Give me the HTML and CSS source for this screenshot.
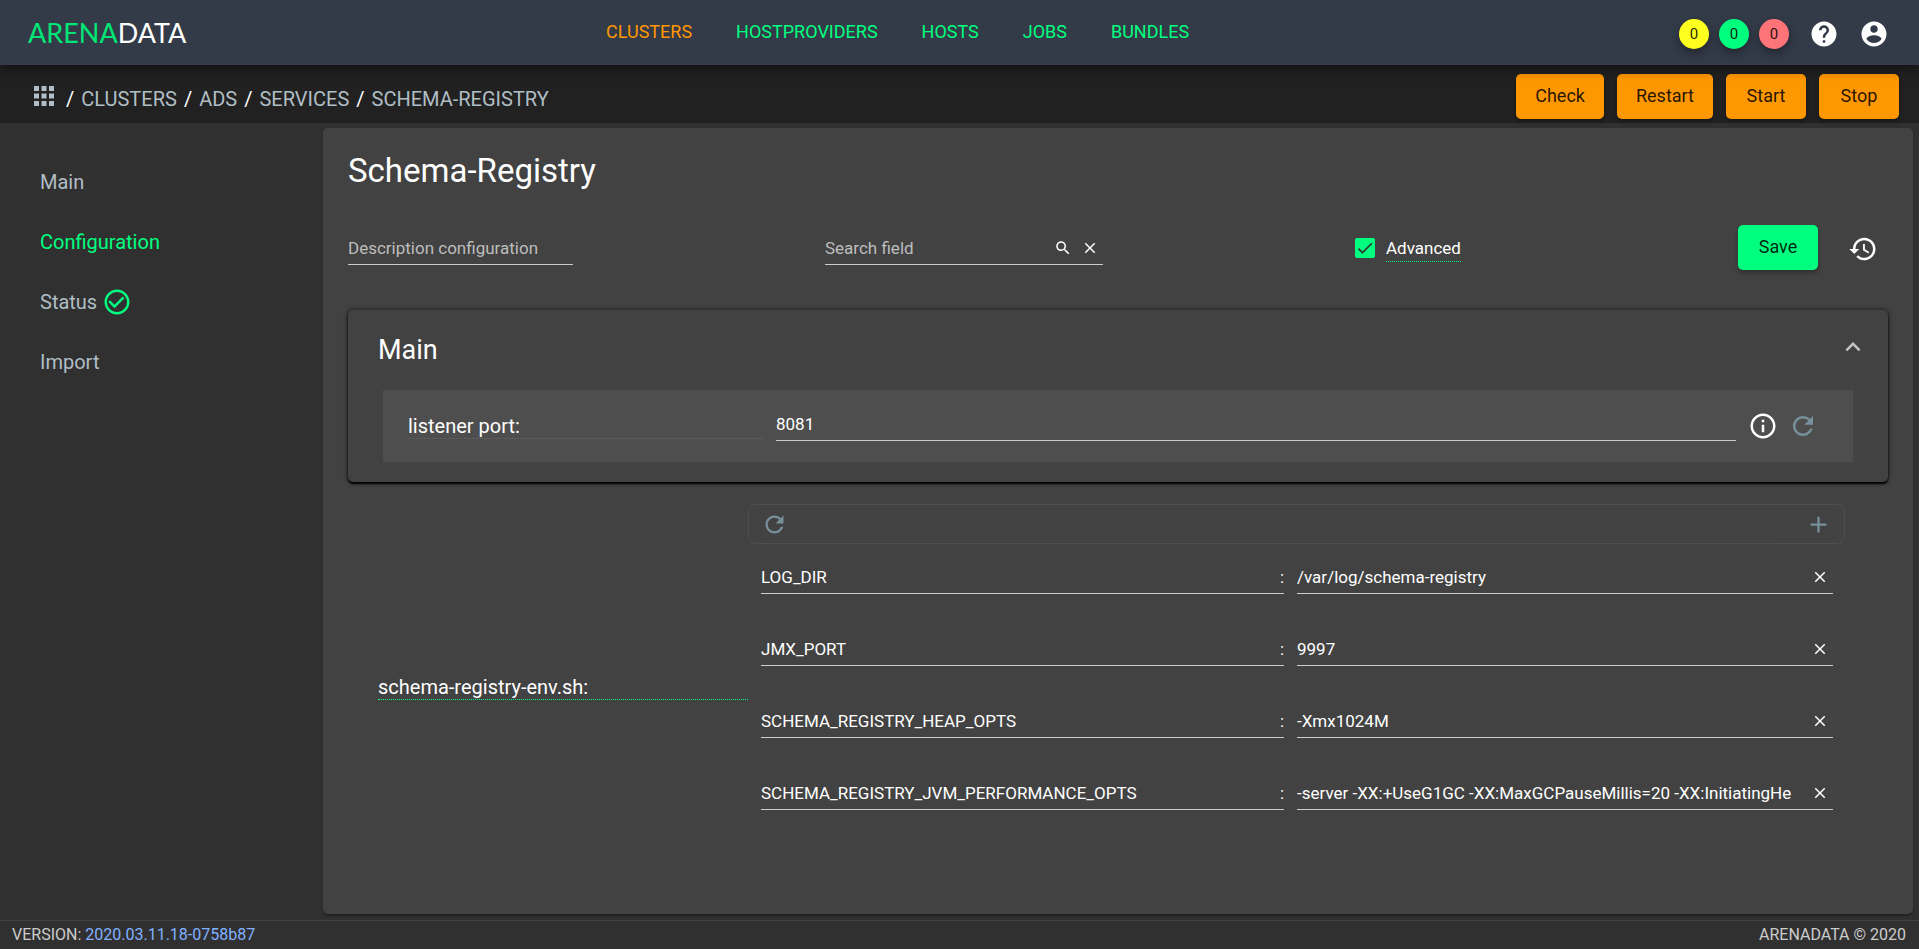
FILE: index.html
```
<!DOCTYPE html>
<html lang="en">
<head>
<meta charset="utf-8">
<title>Schema-Registry - Configuration</title>
<link rel="stylesheet" href="styles.css">
</head>
<body>
<svg class="sprite" aria-hidden="true">
  <symbol id="apps" viewBox="0 0 24 24"><path d="M4 8h4V4H4v4zm6 12h4v-4h-4v4zm-6 0h4v-4H4v4zm0-6h4v-4H4v4zm6 0h4v-4h-4v4zm6-10v4h4V4h-4zm-6 4h4V4h-4v4zm6 6h4v-4h-4v4zm0 6h4v-4h-4v4z"/></symbol>
  <symbol id="help" viewBox="0 0 24 24"><path d="M12 2C6.48 2 2 6.48 2 12s4.48 10 10 10 10-4.48 10-10S17.52 2 12 2zm1 17h-2v-2h2v2zm2.07-7.75l-.9.92C13.45 12.9 13 13.5 13 15h-2v-.5c0-1.1.45-2.1 1.17-2.83l1.24-1.26c.37-.36.59-.86.59-1.41 0-1.1-.9-2-2-2s-2 .9-2 2H8c0-2.21 1.79-4 4-4s4 1.79 4 4c0 .88-.36 1.68-.93 2.25z"/></symbol>
  <symbol id="account" viewBox="0 0 24 24"><path d="M12 2C6.48 2 2 6.48 2 12s4.48 10 10 10 10-4.48 10-10S17.52 2 12 2zm0 3c1.66 0 3 1.34 3 3s-1.34 3-3 3-3-1.340-3-3 1.340-3 3-3zm0 14.2c-2.500 0-4.710-1.280-6-3.220.030-1.990 4-3.080 6-3.080 1.990 0 5.970 1.090 6 3.080-1.290 1.940-3.500 3.220-6 3.220z"/></symbol>
  <symbol id="done" viewBox="0 0 24 24"><path d="M16.590 7.580L10 14.170l-3.590-3.580L5 12l5 5 8-8zM12 2C6.480 2 2 6.480 2 12s4.480 10 10 10 10-4.480 10-10S17.520 2 12 2zm0 18c-4.420 0-8-3.580-8-8s3.580-8 8-8 8 3.580 8 8-3.580 8-8 8z"/></symbol>
  <symbol id="search" viewBox="0 0 24 24"><path d="M15.500 14h-.79l-.28-.27C15.410 12.590 16 11.110 16 9.500 16 5.910 13.090 3 9.500 3S3 5.910 3 9.500 5.910 16 9.500 16c1.610 0 3.090-.59 4.230-1.570l.27.28v.79l5 4.990L20.490 19l-4.990-5zm-6 0C7.010 14 5 11.990 5 9.500S7.010 5 9.500 5 14 7.010 14 9.500 11.990 14 9.500 14z"/></symbol>
  <symbol id="close" viewBox="0 0 24 24"><path d="M19 6.410L17.590 5 12 10.590 6.410 5 5 6.410 10.590 12 5 17.590 6.410 19 12 13.410 17.590 19 19 17.590 13.410 12z"/></symbol>
  <symbol id="history" viewBox="0 0 24 24"><path d="M13 3c-4.970 0-9 4.030-9 9H1l3.890 3.890.07.14L9 12H6c0-3.870 3.130-7 7-7s7 3.130 7 7-3.130 7-7 7c-1.930 0-3.680-.79-4.940-2.060l-1.420 1.420C8.270 19.990 10.510 21 13 21c4.970 0 9-4.030 9-9s-4.030-9-9-9zm-1 5v5l4.280 2.540.72-1.210-3.500-2.080V8H12z"/></symbol>
  <symbol id="info" viewBox="0 0 24 24"><path d="M11 17h2v-6h-2v6zm1-15C6.480 2 2 6.480 2 12s4.480 10 10 10 10-4.480 10-10S17.520 2 12 2zm0 18c-4.410 0-8-3.590-8-8s3.590-8 8-8 8 3.590 8 8-3.590 8-8 8zM11 9h2V7h-2v2z"/></symbol>
  <symbol id="refresh" viewBox="0 0 24 24"><path d="M17.650 6.350C16.200 4.900 14.210 4 12 4c-4.420 0-7.990 3.580-7.990 8s3.570 8 7.990 8c3.730 0 6.840-2.550 7.730-6h-2.080c-.82 2.330-3.040 4-5.650 4-3.310 0-6-2.690-6-6s2.690-6 6-6c1.660 0 3.140.69 4.220 1.780L13 11h7V4l-2.350 2.350z"/></symbol>
  <symbol id="add" viewBox="0 0 24 24"><path d="M19 13h-6v6h-2v-6H5v-2h6V5h2v6h6v2z"/></symbol>
  <symbol id="less" viewBox="0 0 24 24"><path d="M12 8l-6 6 1.410 1.410L12 10.830l4.590 4.580L18 14z"/></symbol>
  <symbol id="tick" viewBox="0 0 24 24"><path d="M4.100 12.700 9 17.600 20.300 6.300" fill="none" stroke="currentColor" stroke-width="2"/></symbol>
</svg>

<header class="topbar">
  <a class="logo" href="#"><span class="logo-accent">ARENA</span>DATA</a>
  <nav class="topnav">
    <a class="active" href="#">CLUSTERS</a>
    <a href="#">HOSTPROVIDERS</a>
    <a href="#">HOSTS</a>
    <a href="#">JOBS</a>
    <a href="#">BUNDLES</a>
  </nav>
  <div class="topbar-tools">
    <button class="counter counter-running">0</button>
    <button class="counter counter-success">0</button>
    <button class="counter counter-failed">0</button>
    <button class="icon-button" aria-label="Help"><svg class="icon"><use href="#help"/></svg></button>
    <button class="icon-button" aria-label="Account"><svg class="icon"><use href="#account"/></svg></button>
  </div>
</header>

<div class="subbar">
  <nav class="crumbs">
    <a class="crumb-home" href="#" aria-label="Home"><svg class="icon"><use href="#apps"/></svg></a>
    <span>/</span><a href="#">CLUSTERS</a>
    <span>/</span><a href="#">ADS</a>
    <span>/</span><a href="#">SERVICES</a>
    <span>/</span><a href="#">SCHEMA-REGISTRY</a>
  </nav>
  <div class="actions">
    <button class="button">Check</button>
    <button class="button">Restart</button>
    <button class="button">Start</button>
    <button class="button">Stop</button>
  </div>
</div>

<div class="layout">
  <nav class="sidebar">
    <a href="#">Main</a>
    <a class="active" href="#">Configuration</a>
    <a href="#">Status <svg class="icon icon-ok"><use href="#done"/></svg></a>
    <a href="#">Import</a>
  </nav>

  <main class="card">
    <h1>Schema-Registry</h1>

    <div class="toolbar">
      <input class="field description" type="text" placeholder="Description configuration" aria-label="Description configuration">
      <div class="field search">
        <input type="text" placeholder="Search field" aria-label="Search field">
        <button class="mini-button" aria-label="Search"><svg class="icon-small"><use href="#search"/></svg></button>
        <button class="mini-button" aria-label="Clear"><svg class="icon-small"><use href="#close"/></svg></button>
      </div>
      <label class="advanced">
        <span class="checkbox"><input type="checkbox" checked><svg class="checkmark"><use href="#tick"/></svg></span>
        <span class="advanced-text">Advanced</span>
      </label>
      <div class="save-group">
        <button class="button button-save">Save</button>
        <button class="icon-button history" aria-label="History"><svg class="icon"><use href="#history"/></svg></button>
      </div>
    </div>

    <section class="panel">
      <div class="panel-header">
        <h2>Main</h2>
        <button class="icon-button panel-toggle" aria-label="Collapse"><svg class="icon"><use href="#less"/></svg></button>
      </div>
      <div class="panel-row">
        <label class="row-label" for="port">listener port:</label>
        <input class="field port" id="port" type="text" value="8081">
        <button class="icon-button" aria-label="Info"><svg class="icon"><use href="#info"/></svg></button>
        <button class="icon-button muted" aria-label="Reset"><svg class="icon"><use href="#refresh"/></svg></button>
      </div>
    </section>

    <section class="map">
      <div class="map-label">schema-registry-env.sh:</div>
      <div class="map-body">
        <div class="map-tools">
          <button class="muted map-button" aria-label="Reset"><svg class="icon-medium"><use href="#refresh"/></svg></button>
          <button class="muted map-button" aria-label="Add"><svg class="icon-medium"><use href="#add"/></svg></button>
        </div>
        <div class="pair">
          <div class="field pair-key"><input type="text" value="LOG_DIR" aria-label="Key 1"><span>:</span></div>
          <div class="field pair-value"><input type="text" value="/var/log/schema-registry" aria-label="Value 1"><button class="mini-button" aria-label="Remove"><svg class="icon-small"><use href="#close"/></svg></button></div>
        </div>
        <div class="pair">
          <div class="field pair-key"><input type="text" value="JMX_PORT" aria-label="Key 2"><span>:</span></div>
          <div class="field pair-value"><input type="text" value="9997" aria-label="Value 2"><button class="mini-button" aria-label="Remove"><svg class="icon-small"><use href="#close"/></svg></button></div>
        </div>
        <div class="pair">
          <div class="field pair-key"><input type="text" value="SCHEMA_REGISTRY_HEAP_OPTS" aria-label="Key 3"><span>:</span></div>
          <div class="field pair-value"><input type="text" value="-Xmx1024M" aria-label="Value 3"><button class="mini-button" aria-label="Remove"><svg class="icon-small"><use href="#close"/></svg></button></div>
        </div>
        <div class="pair">
          <div class="field pair-key"><input type="text" value="SCHEMA_REGISTRY_JVM_PERFORMANCE_OPTS" aria-label="Key 4"><span>:</span></div>
          <div class="field pair-value"><input type="text" value="-server -XX:+UseG1GC -XX:MaxGCPauseMillis=20 -XX:InitiatingHe" aria-label="Value 4"><button class="mini-button" aria-label="Remove"><svg class="icon-small"><use href="#close"/></svg></button></div>
        </div>
      </div>
    </section>
  </main>
</div>

<footer class="footer">
  <span>VERSION: <a href="#">2020.03.11.18-0758b87</a></span>
  <span>ARENADATA © 2020</span>
</footer>
</body>
</html>
```
FILE: styles.css
```
* {
  box-sizing: border-box;
}

body {
  margin: 0;
  min-height: 100vh;
  display: flex;
  flex-direction: column;
  background: #303030;
  color: #fff;
  font-family: Roboto, "Liberation Sans", sans-serif;
  font-size: 18px;
  line-height: 24px;
}

a {
  color: inherit;
  text-decoration: none;
}

button,
input {
  font: inherit;
  color: inherit;
  background: none;
  border: 0;
  padding: 0;
  margin: 0;
  outline: none;
}

h1,
h2 {
  margin: 0;
  font-weight: 400;
}

.sprite {
  display: none;
}

.icon,
.icon-medium,
.icon-small {
  display: block;
  fill: currentColor;
  flex: none;
}

.icon {
  width: 30px;
  height: 30px;
}

.icon-medium {
  width: 27px;
  height: 27px;
}

.icon-small {
  width: 18px;
  height: 18px;
}

.icon-button {
  display: flex;
  align-items: center;
  justify-content: center;
  width: 50px;
  height: 50px;
}

.muted {
  color: #78909c;
}

/* Top bar */

.topbar {
  display: grid;
  grid-template-columns: 607fr auto 731fr;
  align-items: center;
  height: 65px;
  background: #333a48;
  box-shadow: 0 3px 12px rgba(0, 0, 0, 0.55);
  z-index: 1;
}

.logo {
  padding-left: 28px;
  font-family: Lato, sans-serif;
  font-size: 27px;
  line-height: 32px;
}

.logo-accent {
  color: #00e676;
}

.topnav {
  display: flex;
  gap: 44px;
  color: #00ff7f;
  padding-bottom: 2px;
}

.topnav .active {
  color: #ff9800;
}

.topbar-tools {
  display: flex;
  align-items: center;
  justify-content: flex-end;
  padding: 3px 20px 0 0;
}

.counter {
  width: 30px;
  height: 30px;
  margin-right: 10px;
  border-radius: 50%;
  color: rgba(0, 0, 0, 0.87);
  font-size: 15px;
  line-height: 30px;
  box-shadow: 0 4px 10px rgba(0, 0, 0, 0.35);
}

.counter-running {
  background: #ffff1f;
}

.counter-success {
  background: #00ff7f;
}

.counter-failed {
  background: #ff7479;
}

/* Breadcrumb bar */

.subbar {
  display: flex;
  align-items: center;
  justify-content: space-between;
  height: 58px;
  padding: 4px 20px 0 29px;
  background: #212121;
}

.crumbs {
  display: flex;
  align-items: center;
  gap: 7px;
  padding-top: 5px;
  font-size: 20px;
}

.crumbs a {
  color: #b0bec5;
}

.crumb-home {
  padding-bottom: 5px;
}

.actions {
  display: flex;
  gap: 13px;
}

.button {
  min-width: 80px;
  height: 45px;
  padding: 0 19px;
  border-radius: 5px;
  background: #ff9800;
  color: rgba(0, 0, 0, 0.87);
  box-shadow: 0 3px 4px rgba(0, 0, 0, 0.25);
}

.button-save {
  background: #00ff7f;
}

/* Page body */

.layout {
  flex: 1;
  display: flex;
  padding: 5px 6px 6px 0;
}

.sidebar {
  flex: none;
  width: 323px;
  padding: 24px 0 0 40px;
  font-size: 20px;
  color: #b0bec5;
}

.sidebar a {
  display: flex;
  align-items: center;
  gap: 5px;
  height: 60px;
}

.sidebar .active,
.icon-ok {
  color: #00ff7f;
}

.card {
  flex: 1;
  min-width: 0;
  padding: 21px 25px 20px;
  border-radius: 5px;
  background: #424242;
  box-shadow: 0 2px 2px rgba(0, 0, 0, 0.3);
}

h1 {
  font-size: 33px;
  line-height: 44px;
}

.toolbar {
  display: flex;
  justify-content: space-between;
  align-items: center;
  margin: 29px 0 38px;
}

.field {
  border-bottom: 1px solid #ccc;
  height: 36px;
  padding-top: 2px;
  font-size: 17px;
  min-width: 0;
}

.field input {
  flex: 1;
  min-width: 0;
  height: 24px;
}

input::placeholder {
  color: #bdbdbd;
  opacity: 1;
}

.description {
  width: 225px;
}

.search {
  display: flex;
  align-items: center;
  width: 278px;
}

.mini-button {
  display: flex;
  align-items: center;
  justify-content: center;
  flex: none;
  width: 27px;
  height: 24px;
}

.advanced {
  display: flex;
  align-items: center;
  gap: 11px;
  padding-top: 2px;
  font-size: 17px;
}

.checkbox {
  display: grid;
  width: 20px;
  height: 20px;
}

.checkbox input,
.checkmark {
  grid-area: 1 / 1;
  width: 20px;
  height: 20px;
}

.checkbox input {
  appearance: none;
  border-radius: 2px;
  background: #00ff7f;
}

.checkmark {
  color: #303030;
  pointer-events: none;
}

.advanced-text {
  border-bottom: 1px dotted #00ff7f;
  line-height: 26px;
}

.save-group {
  display: flex;
  align-items: center;
  gap: 20px;
  padding-left: 25px;
}

.history {
  padding-top: 3px;
}

/* Main group */

.panel {
  padding: 20px 35px;
  border-radius: 5px;
  box-shadow: 0 2px 2px #000, 0 0 5px rgba(0, 0, 0, 0.7);
}

.panel-header {
  display: flex;
  align-items: center;
  justify-content: space-between;
  height: 60px;
  margin: 0 -15px 0 -5px;
  padding-bottom: 26px;
}

.panel-toggle {
  width: 30px;
  color: #c6c6c6;
}

h2 {
  padding-top: 5px;
  font-size: 27px;
  line-height: 36px;
}

.panel-row {
  display: flex;
  align-items: center;
  height: 72px;
  padding: 0 30px 0 25px;
  background: #4e4e4e;
}

.row-label {
  flex: none;
  width: 355px;
  margin-right: 13px;
  border-bottom: 1px dotted #666;
  font-size: 20px;
}

.port {
  flex: 1;
  margin: 0 7px 6px 0;
}

.panel-row .icon-button {
  width: 40px;
}

/* Key and value list */

.map {
  display: flex;
  align-items: center;
  padding: 22px 43px 0 30px;
}

.map-label {
  flex: none;
  width: 370px;
  border-bottom: 1px dotted #00ff7f;
  font-size: 20px;
}

.map-body {
  flex: 1;
  min-width: 0;
  padding-bottom: 39px;
}

.map-tools {
  display: flex;
  align-items: center;
  justify-content: space-between;
  height: 40px;
  padding: 0 12px;
  border: 1px dotted #5c5c5c;
  border-radius: 8px;
}

.pair {
  display: flex;
  gap: 13px;
  height: 72px;
  padding: 14px 12px 0 13px;
}

.pair-key,
.pair-value {
  display: flex;
  align-items: center;
}

.pair-key {
  flex: 523;
}

.pair-value {
  flex: 536;
}

/* Footer */

.footer {
  display: flex;
  justify-content: space-between;
  height: 29px;
  padding: 2px 13px 0 12px;
  border-top: 1px solid #424242;
  color: #ccc;
  font-size: 16px;
}

.footer a {
  color: #82b1ff;
}
```
